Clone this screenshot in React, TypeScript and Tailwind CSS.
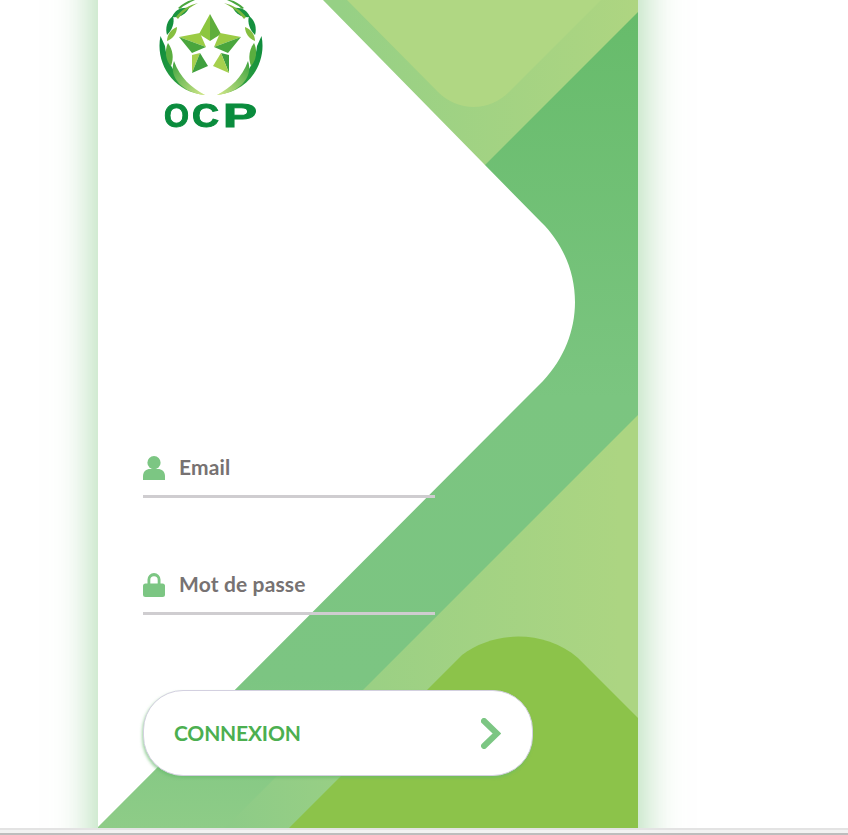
import React from "react";

function Logo() {
  const Side = () => (
    <g>
      <path d="M160.5 36 C155 62 172 92 205 95 C184 87 167 68 165 46 Z" fill="url(#lgDark)" />
      <path d="M174 61 C168 78 184 93 205 95 C191 87 180 78 174 61 Z" fill="url(#lgLeaf)" />
      <path d="M168 43 C164 51 166 61 171 66 C174 58 173 50 168 43 Z" fill="#5aae3f" />
      <path d="M177 27 C171 29 167 35 167 41 C173 39 177 33 177 27 Z" fill="#86bf40" />
      <path d="M173 16 C167 20 165 28 167 35 C172 30 175 23 173 16 Z" fill="#14903e" />
      <path d="M189 8 C181 7 175 10 172 17 C180 18 186 14 189 8 Z" fill="#1a9440" />
      <path d="M176 17 C181 10 189 5 198 3 C190 7 183 12 178 19 Z" fill="#7ab83e" />
      <path d="M178 8 C182 4 187 1 192 0 L195 0 C189 3 184 5 180 9 Z" fill="#49a63e" />
    </g>
  );
  return (
    <svg viewBox="155 0 112 140" className="block h-[140px] w-[112px] blur-[0.3px]">
      <defs>
        <linearGradient id="lgDark" x1="0" y1="0" x2="1" y2="1">
          <stop offset="0" stopColor="#0c8a3c" />
          <stop offset="0.6" stopColor="#2a9d3f" />
          <stop offset="1" stopColor="#c4de68" />
        </linearGradient>
        <linearGradient id="lgLeaf" x1="0" y1="0" x2="1" y2="1">
          <stop offset="0" stopColor="#3ea33f" />
          <stop offset="1" stopColor="#d3e88a" />
        </linearGradient>
      </defs>
      <Side />
      <g transform="translate(422 0) scale(-1 1)">
        <Side />
      </g>
      <path d="M210 14 L199 34 L210 41 Z" fill="#8cc63f" />
      <path d="M210 14 L221 34 L210 41 Z" fill="#5fae3c" />
      <path d="M179 37 L200 33 L206 47 Z" fill="#9ccc45" />
      <path d="M179 37 L206 47 L192 53 Z" fill="#4aa63d" />
      <path d="M241 37 L220 33 L214 47 Z" fill="#9ccc45" />
      <path d="M241 37 L214 47 L228 53 Z" fill="#4aa63d" />
      <path d="M192 73 L192 55 L200 53 Z" fill="#a6d04e" />
      <path d="M192 73 L200 53 L208 66 Z" fill="#3f9f3e" />
      <path d="M229 73 L229 55 L221 53 Z" fill="#3f9f3e" />
      <path d="M229 73 L221 53 L213 66 Z" fill="#a6d04e" />
      <g fontFamily="'Liberation Sans', sans-serif" fontWeight="700" fontSize="33" fill="#0a8c3d" stroke="#0a8c3d" strokeWidth="1">
        <text x="164" y="127" textLength="25" lengthAdjust="spacingAndGlyphs">O</text>
        <text x="192" y="127" textLength="27" lengthAdjust="spacingAndGlyphs">C</text>
        <text x="223" y="127" textLength="34" lengthAdjust="spacingAndGlyphs">P</text>
      </g>
    </svg>
  );
}

function Background() {
  return (
    <svg viewBox="98 0 540 828" className="absolute left-0 top-[80px] h-[828px] w-[540px]">
      <defs>
        <linearGradient id="base" gradientUnits="userSpaceOnUse" x1="0" y1="0" x2="0" y2="828">
          <stop offset="0" stopColor="#66bb6a" />
          <stop offset="0.48" stopColor="#7bc580" />
          <stop offset="0.82" stopColor="#7cc582" />
          <stop offset="1" stopColor="#8ecc87" />
        </linearGradient>
        <linearGradient id="top" gradientUnits="userSpaceOnUse" x1="340" y1="0" x2="638" y2="0">
          <stop offset="0" stopColor="#96d085" />
          <stop offset="1" stopColor="#aed581" />
        </linearGradient>
        <linearGradient id="band" gradientUnits="userSpaceOnUse" x1="226" y1="0" x2="620" y2="0">
          <stop offset="0" stopColor="#8dcb87" />
          <stop offset="0.37" stopColor="#9bd084" />
          <stop offset="1" stopColor="#acd582" />
        </linearGradient>
      </defs>
      <rect x="98" y="0" width="540" height="828" fill="url(#base)" />
      <path d="M323 0 H638 V12 L484 166 L320 0 Z" fill="url(#top)" />
      <path d="M347 0 L438 92 C458 112 490 112 510 91 L601 0 Z" fill="#b0d783" />
      <path d="M638 415 V828 H225 Z" fill="url(#band)" />
      <path d="M289 828 L462 655 C495 630 545 630 578 658 L638 718 V828 Z" fill="#8cc34a" />
      <path d="M98 0 H323 L541 222 C586 266 586 336 543 381 L98 827 Z" fill="#ffffff" />
    </svg>
  );
}

function Field({ icon, label, first }: { icon: React.ReactNode; label: string; first?: boolean }) {
  return (
    <div className={first ? "mt-[316px]" : "mt-[75px]"}>
      <div className="flex h-6 items-center">
        {icon}
        <span className="ml-[14px] mt-[-2px] font-['Lato',sans-serif] text-[21px] font-bold tracking-[0.15px] text-[#777272]">{label}</span>
      </div>
      <div className="mt-[15px] h-[3px] w-[292px] bg-[#cfcdd0]" />
    </div>
  );
}

export default function App() {
  return (
    <div className="flex h-[835px] w-[848px] flex-col overflow-hidden bg-white">
      <div className="h-[828px] overflow-hidden">
        <div className="relative ml-[98px] mt-[-80px] h-[1000px] w-[540px] bg-white pt-[80px] shadow-[0_0_34px_8px_rgba(129,199,132,0.55)]">
          <Background />
          <div className="relative pl-[45px]">
            <div className="ml-[12px]">
              <Logo />
            </div>
            <Field
              first
              label="Email"
              icon={
                <svg viewBox="0 0 22 24" className="h-6 w-[22px] shrink-0" fill="#7cc683">
                  <circle cx="11" cy="6.7" r="6.6" />
                  <path d="M0 20 C0 15.5 3.5 13 7 13 H15 C18.5 13 22 15.5 22 20 V24 H0 Z" />
                </svg>
              }
            />
            <Field
              label="Mot de passe"
              icon={
                <svg viewBox="0 0 22 24" className="h-6 w-[22px] shrink-0" fill="#7cc683">
                  <path d="M4.5 11 V6.5 A6.5 6.5 0 0 1 17.5 6.5 V11 H14.7 V7 A3.7 3.7 0 0 0 7.3 7 V11 Z" />
                  <rect x="0" y="10.5" width="22" height="13.5" rx="2.5" />
                </svg>
              }
            />
            <button className="mt-[75px] flex h-[86px] w-[390px] items-center justify-between rounded-[40px] border border-[#d3d0e0] bg-white pl-[30px] pr-[31px] shadow-[-1px_2px_3px_rgba(102,187,106,0.6)]">
              <span className="font-['Lato',sans-serif] text-[21px] font-bold tracking-[-0.2px] text-[#4caf50]">CONNEXION</span>
              <svg viewBox="0 0 20 31" className="h-[31px] w-5" fill="none" stroke="#7cc683" strokeWidth="6" strokeLinecap="round" strokeLinejoin="miter">
                <path d="M3 3 L16 15.5 L3 28" />
              </svg>
            </button>
          </div>
        </div>
      </div>
      <div className="h-[7px] border-y-2 border-t-[#e3e3e3] border-b-[#bdbdbd] bg-[#f2f2f2]" />
    </div>
  );
}
